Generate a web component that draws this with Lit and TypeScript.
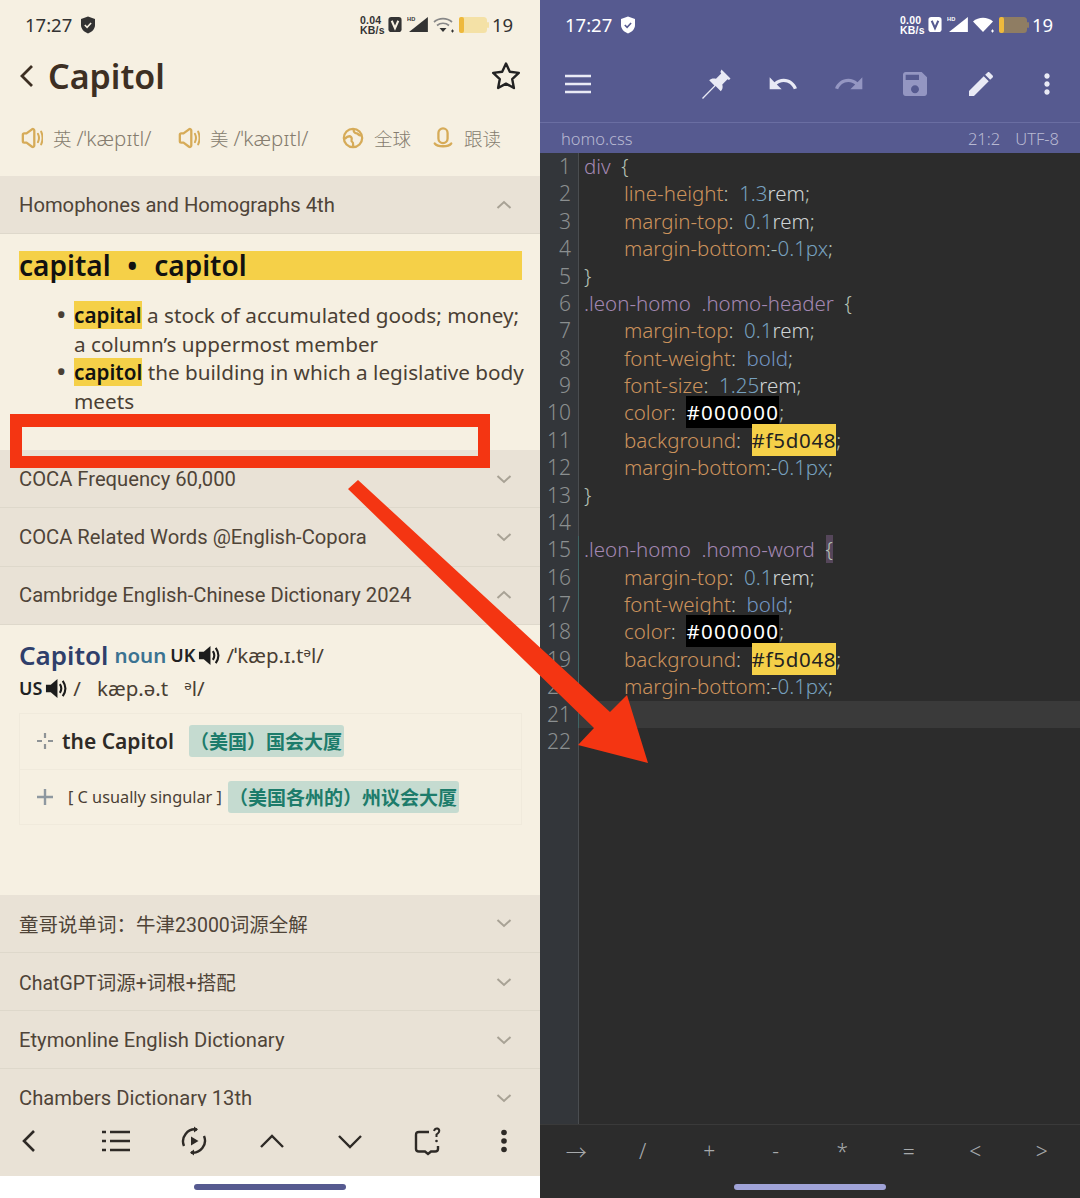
import { LitElement, html, css, svg } from "lit";
import { customElement } from "lit/decorators.js";

type Tok = [string, string];
const P = "p", N = "n", T = "t", U = "u", S = "s", B = "bv";
const prop = (name: string, ...rest: Tok[]): Tok[] => [["ind", ""], [P, name], ...rest];
const CODE: Tok[][] = [
  [[S, "div"], [U, "  {"]],
  prop("line-height", [U, ":  "], [N, "1.3"], [T, "rem"], [U, ";"]),
  prop("margin-top", [U, ":  "], [N, "0.1"], [T, "rem"], [U, ";"]),
  prop("margin-bottom", [U, ":-"], [N, "0.1px"], [U, ";"]),
  [[U, "}"]],
  [[S, ".leon-homo  .homo-header"], [U, "  {"]],
  prop("margin-top", [U, ":  "], [N, "0.1"], [T, "rem"], [U, ";"]),
  prop("font-weight", [U, ":  "], [B, "bold"], [U, ";"]),
  prop("font-size", [U, ":  "], [N, "1.25"], [T, "rem"], [U, ";"]),
  prop("color", [U, ":  "], ["blk", "#000000"], [U, ";"]),
  prop("background", [U, ":  "], ["yel", "#f5d048"], [U, ";"]),
  prop("margin-bottom", [U, ":-"], [N, "0.1px"], [U, ";"]),
  [[U, "}"]],
  [],
  [[S, ".leon-homo  .homo-word"], [U, "  "], ["brk", "{"]],
  prop("margin-top", [U, ":  "], [N, "0.1"], [T, "rem"], [U, ";"]),
  prop("font-weight", [U, ":  "], [B, "bold"], [U, ";"]),
  prop("color", [U, ":  "], ["blk", "#000000"], [U, ";"]),
  prop("background", [U, ":  "], ["yel", "#f5d048"], [U, ";"]),
  prop("margin-bottom", [U, ":-"], [N, "0.1px"], [U, ";"]),
  [],
  [],
];

const chevron = (up: boolean) => html`<svg class="chev" viewBox="0 0 16 10"><path d="${up ? "M1.5 8 8 2l6.5 6" : "M1.5 2 8 8l6.5-6"}" fill="none" stroke="currentColor" stroke-width="2"/></svg>`;
const mdi = (d: string, cls = "") => html`<svg class="mi ${cls}" viewBox="0 0 24 24"><path d="${d}" fill="currentColor"/></svg>`;
const speakerOutline = html`<svg class="ph" viewBox="0 0 24 24" fill="none" stroke="currentColor" stroke-width="2.500"><path d="M2 8.500Q2 7 3.500 7H6l6-4.500c1.200-.7 2.500 0 2.500 1.300v16.400c0 1.300-1.300 2-2.500 1.300L6 17H3.500Q2 17 2 15.500z" stroke-linejoin="round"/><path d="M18.500 7.500c1.500 3 1.500 6 0 9M22 5c2 4.500 2 9.500 0 14" stroke-linecap="round" stroke-width="2.200"/></svg>`;
const speakerSolid = html`<svg class="spk" viewBox="0 0 24 24"><path d="M1 8h5l7-6v20l-7-6H1z" fill="#1c1c1c"/><path d="M15.500 7.500c2 3 2 6 0 9M18.500 4c3.500 5 3.500 11 0 16" fill="none" stroke="#1c1c1c" stroke-width="2.200"/></svg>`;

function statusBar(speed: string, dark: boolean) {
  const fg = dark ? "#fff" : "#333";
  const batt = dark ? "#8f7d63" : "#f4e1a6";
  const bg = dark ? "#565a90" : "#f6f0e2";
  return html`<div class="status ${dark ? "sdark" : ""}">
    <span class="clock">17:27</span>
    <svg class="shield" viewBox="0 0 16 18"><path d="M8 .500 15 3v6c0 4-3 7-7 8.500C4 16 1 13 1 9V3z" fill="${fg}"/><path d="m4.800 9 2.300 2.300 4-4.300" fill="none" stroke="${bg}" stroke-width="1.600"/></svg>
    <span class="grow"></span>
    <span class="speed"><span>${speed}</span><span>KB/s</span></span>
    <svg class="vb" viewBox="0 0 14 16"><rect width="14" height="16" y="0" rx="3" fill="${fg}"/><path d="m3.500 4 3.500 8 3.500-8" fill="none" stroke="${bg}" stroke-width="2.200"/></svg>
    <svg class="sig" viewBox="0 0 22 18"><path d="M22 1v16H2z" fill="${fg}"/><rect x="0" y="0" width="10" height="6.500" fill="${bg}"/><text x="0" y="5.500" font-size="6" font-weight="700" font-family="Liberation Sans" fill="${fg}">HD</text></svg>
    <svg class="wifi" viewBox="0 0 22 18">
      ${dark
        ? svg`<path d="M0 5.500C5.500.500 14.500.500 20 5.500L10 16z" fill="${fg}"/>`
        : svg`<path d="M1 6c5-4.500 13-4.500 18 0M4 9.500c3.500-3 8.500-3 12 0" fill="none" stroke="#888" stroke-width="1.700"/><path d="M6.500 12h7L10 16z" fill="#333"/>`}
      <path d="M18 15h3M19.500 13.500v3" stroke="${fg}" stroke-width="1"/>
    </svg>
    <svg class="bat" viewBox="0 0 30 18"><rect x="0" y="1" width="28" height="16" rx="3.500" fill="${batt}"/><rect x="0" y="1" width="5" height="16" rx="2" fill="#eeb93c"/><rect x="28" y="6" width="2" height="6" rx="1" fill="${batt}"/></svg>
    <span class="level">19</span>
  </div>`;
}

const row = (label: string, up = false, cjk = false) => html`<div class="sec ${cjk ? "seccjk" : ""}"><span>${label}</span>${chevron(up)}</div>`;

@customElement("app-root")
export class AppRoot extends LitElement {
  static styles = css`
    :host { display: block; width: 1080px; height: 1198px; position: relative; overflow: hidden;
      font-family: "Noto Sans", "Noto Sans CJK SC", sans-serif; }
    .page { display: grid; grid-template-columns: 540px 540px; height: 1198px; }
    .left { display: flex; flex-direction: column; background: #f6f0e2; color: #4a3f34; height: 1198px; overflow: hidden; }
    .right { display: flex; flex-direction: column; background: #2c2c2c; height: 1198px; overflow: hidden; }

    .status { display: flex; align-items: center; height: 50px; box-sizing: border-box; padding: 0 28px 1px 25px; color: #333; flex: none; }
    .sdark { color: #fff; }
    .clock { font-size: 18.500px; width: 55px; }
    .shield { width: 16px; height: 18px; }
    .grow { flex: 1; }
    .speed { display: flex; flex-direction: column; font: 700 10.500px/10px "Liberation Sans", sans-serif; width: 28px; letter-spacing: .2px; }
    .vb { width: 14px; height: 15px; margin-right: 5px; }
    .sig { width: 21px; height: 17px; margin-right: 5px; }
    .wifi { width: 22px; height: 18px; margin-right: 4px; }
    .bat { width: 30px; height: 18px; margin-right: 3px; }
    .level { font-size: 18.500px; width: 20px; }

    .head { display: flex; align-items: center; height: 54px; box-sizing: border-box; padding: 0 19px 2px 19px; flex: none; }
    .back { width: 16px; height: 26px; margin-right: 13px; color: #3d2f23; }
    .title { font-size: 34px; font-weight: 600; color: #3d2f23; flex: 1; line-height: 52px; }
    .star { width: 30px; height: 30px; }

    .phon { display: grid; grid-template-columns: 157px 164px 90px auto; height: 68px; padding: 0 0 4px 21px; align-items: center; flex: none; }
    .phi { display: flex; align-items: center; gap: 10px; font-size: 18.500px; color: #857c6e; white-space: nowrap; }
    .ipa { font-size: 20.500px; font-weight: 300; margin-left: -5px; }
    .cjk { font-weight: 300; }
    .ph { width: 22px; height: 22px; color: #d6ab58; flex: none; }

    .scroll { flex: 1; min-height: 0; overflow: hidden; }
    .sec { display: flex; align-items: center; justify-content: space-between; height: 57.200px; background: #e9e2d6; border-bottom: 1px solid #ded8cb; padding: 0 28px 0 19px; font: 400 20.200px Roboto, "Noto Sans CJK SC", sans-serif; color: #4f4438; white-space: nowrap; }
    .seccjk { font-size: 19.500px; }
    .chev { width: 16px; height: 10px; color: #a8a295; }
    .homo { height: 216px; padding: 17px 18px 0 19px; box-sizing: border-box; }
    .bar { background: #f5d048; height: 29px; line-height: 29px; color: #111; font-weight: 600; font-size: 28px; white-space: pre; word-spacing: 1px; }
    .list { margin: 21px -4px 0 0; padding: 0 0 0 55px; font-size: 20.700px; line-height: 28.600px; color: #4a3f34; list-style: none; }
    .list li::before { content: "•"; display: inline-block; width: 18px; margin-left: -18px; font-size: 28px; line-height: 0; vertical-align: -2px; }
    .hl { background: #f5d048; color: #111; font-weight: 600; }
    .camb { height: 270px; padding: 14px 18px 0 19px; box-sizing: border-box; }
    .cline { display: flex; align-items: center; height: 33px; white-space: pre; color: #4a3f34; font-size: 20.500px; }
    .word { font-size: 26px; font-weight: 600; color: #2f3f6b; margin-right: 6px; }
    .pos { font-size: 20.500px; font-weight: 600; color: #3b7391; margin-right: 4px; }
    .reg { font-size: 18px; font-weight: 600; color: #222; margin-right: 3px; }
    .spk { width: 23px; height: 23px; margin-right: 5px; }
    .box { border: 1px solid #f0eadc; margin-top: 8px; height: 112px; box-sizing: border-box; }
    .brow { display: flex; align-items: center; height: 55px; padding-left: 16px; box-sizing: border-box; }
    .brow + .brow { border-top: 1px solid #f0eadc; height: 55px; }
    .plus { width: 18px; height: 18px; flex: none; }
    .hw { font-size: 21px; font-weight: 600; color: #2e2a26; margin: 0 15px 0 8px; }
    .gram { font-size: 16.300px; color: #4a3f34; margin: 0 6px 0 14px; white-space: pre; }
    .tag { background: #c5dbd0; color: #1d7c6b; font: 700 19px/32px "Noto Sans CJK SC", sans-serif; padding: 0 2px 0 1px; border-radius: 3px; white-space: nowrap; }

    .tools { display: flex; align-items: center; height: 70px; background: #e9e2d6; padding-left: 16px; gap: 50px; flex: none; color: #2e2a26; }
    .tools svg { width: 28px; height: 30px; flex: none; }
    .tools svg:first-child { margin-right: 8px; }
    .tools svg:last-child { margin-left: -2px; }
    .nav { height: 22px; background: #fff; display: flex; justify-content: center; padding-top: 8px; box-sizing: border-box; flex: none; }
    .nav i { width: 152px; height: 6px; border-radius: 3px; background: #565a90; }
    .ndark { background: #2c2c2c; }
    .ndark i { background: #a0a3d8; }

    .rhead { background: #565a90; flex: none; }
    .rbar { display: flex; align-items: center; height: 68px; padding: 0 17px 4px 24px; color: #e9eaf5; }
    .burger { width: 28px; height: 22px; flex: none; }
    .racts { display: flex; align-items: center; gap: 34px; margin-left: auto; }
    .mi { width: 32px; height: 32px; flex: none; }
    .off { color: #9496c2; }
    .pin { width: 32px; height: 32px; flex: none; }
    .file { display: flex; align-items: center; height: 30px; border-top: 1px solid #6a6ea2; padding: 0 21px; color: #b8b9d2; font-size: 16.500px; font-weight: 300; }
    .pos21 { margin-left: auto; margin-right: 15px; }

    .editor { display: flex; flex: 1; min-height: 0; border-bottom: 1px solid #3a3a3a; }
    .gutter { width: 38px; background: #33363a; border-right: 1px solid #4a4d50; flex: none; }
    .ln { height: 27.380px; line-height: 27.380px; text-align: right; padding-right: 7px; font-size: 21px; color: #8b8f90; font-weight: 300; }
    .mark { box-shadow: 1px 0 0 #3f6464; }
    .lines { flex: 1; }
    .cl { height: 27.380px; line-height: 27.380px; padding-left: 5px; font-size: 20.500px; white-space: pre; font-weight: 300; }
    .act { background: #3a3a3a; }
    .ind { display: inline-block; width: 40px; }
    .p { color: #cc935c; }
    .n { color: #76a0bf; }
    .t { color: #d0d4d5; }
    .u { color: #b6c3b6; }
    .s { color: #a387b2; }
    .bv { color: #7396c2; }
    .blk { background: #000; color: #fff; font-weight: 400; padding: 2px 0; letter-spacing: 1.300px; }
    .yel { background: #f5d048; color: #222; font-weight: 400; padding: 2px 0; letter-spacing: .7px; }
    .brk { background: #55465a; color: #b6c3b6; }

    .keys { display: grid; grid-template-columns: repeat(8, 66.500px); height: 51px; padding-left: 3px; align-items: center; justify-items: center; color: #a7aaac; font-size: 21px; font-weight: 300; flex: none; }
    .overlay { position: absolute; left: 0; top: 0; width: 1080px; height: 1198px; pointer-events: none; }
  `;

  render() {
    return html`<div class="page">
      <section class="left">
        ${statusBar("0.04", false)}
        <div class="head">
          <svg class="back" viewBox="0 0 16 26"><path d="M13 3 3 13l10 10" fill="none" stroke="currentColor" stroke-width="2.800"/></svg>
          <span class="title">Capitol</span>
          <svg class="star" viewBox="0 0 30 30"><path d="m15 2.500 3.800 8.300 9 1.100-6.600 6.200 1.700 8.900L15 22.600l-7.900 4.400 1.700-8.900-6.600-6.200 9-1.100z" fill="none" stroke="#222" stroke-width="2.400" stroke-linejoin="round"/></svg>
        </div>
        <div class="phon">
          <span class="phi">${speakerOutline}<span class="cjk">英</span><span class="ipa">/ˈkæpɪtl/</span></span>
          <span class="phi">${speakerOutline}<span class="cjk">美</span><span class="ipa">/ˈkæpɪtl/</span></span>
          <span class="phi"><svg class="ph" viewBox="0 0 24 24" fill="none" stroke="currentColor" stroke-width="2.500"><circle cx="12" cy="12" r="10"/><path d="M3 13c3-3 5-4 7-2s-1 4 1 5 1 3 1 6M13 2c-1 3 1 5 3 5s2 3 5 2"/></svg><span class="cjk">全球</span></span>
          <span class="phi"><svg class="ph" viewBox="0 0 24 24" fill="none" stroke="currentColor" stroke-width="2.500"><rect x="7" y="1.500" width="10" height="16" rx="5"/><path d="M3 18c3 4 15 4 18 0" stroke-linecap="round"/></svg><span class="cjk">跟读</span></span>
        </div>
        <div class="scroll">
          ${row("Homophones and Homographs 4th", true)}
          <div class="homo">
            <div class="bar">capital  •  capitol</div>
            <ul class="list">
              <li><span class="hl">capital</span> a stock of accumulated goods; money; a column’s uppermost member</li>
              <li><span class="hl">capitol</span> the building in which a legislative body meets</li>
            </ul>
          </div>
          ${row("COCA Frequency 60,000")}
          ${row("COCA Related Words @English-Copora")}
          ${row("Cambridge English-Chinese Dictionary 2024", true)}
          <div class="camb">
            <div class="cline"><span class="word">Capitol</span><span class="pos">noun</span><span class="reg">UK</span>${speakerSolid}<span>/ˈkæp.ɪ.tᵊl/</span></div>
            <div class="cline"><span class="reg">US</span>${speakerSolid}<span>/   kæp.ə.t   ᵊl/</span></div>
            <div class="box">
              <div class="brow">
                <svg class="plus" viewBox="0 0 18 18"><path d="M9 1v5M9 12v5M1 9h5M12 9h5" stroke="#8e9396" stroke-width="2.200"/></svg>
                <span class="hw">the Capitol</span><span class="tag">（美国）国会大厦</span>
              </div>
              <div class="brow">
                <svg class="plus" viewBox="0 0 18 18"><path d="M9 1v16M1 9h16" stroke="#8e98a0" stroke-width="2.400"/></svg>
                <span class="gram">[ C usually singular ]</span><span class="tag">（美国各州的）州议会大厦</span>
              </div>
            </div>
          </div>
          ${row("童哥说单词：牛津23000词源全解", false, true)}
          ${row("ChatGPT词源+词根+搭配", false, true)}
          ${row("Etymonline English Dictionary")}
          ${row("Chambers Dictionary 13th")}
        </div>
        <div class="tools">
          <svg viewBox="0 0 28 30"><path d="M18 5 8 15l10 10" fill="none" stroke="currentColor" stroke-width="2.600"/></svg>
          <svg viewBox="0 0 28 30"><path d="M0 6h4M8 6h20M0 15h4M8 15h20M0 24h4M8 24h20" stroke="currentColor" stroke-width="2.600"/></svg>
          <svg viewBox="0 0 28 30" fill="none" stroke="currentColor" stroke-width="2.400"><path d="M4 20A12 12 0 0 1 17 3.500M24 10a12 12 0 0 1-13 16.500"/><path d="m14 .500 4 3-4 3zM14 23.500l-4 3 4 3z" fill="currentColor" stroke="none"/><path d="M11 10.500v9l7.500-4.500z" fill="currentColor" stroke="none"/></svg>
          <svg viewBox="0 0 28 30"><path d="M3 21 14 10l11 11" fill="none" stroke="currentColor" stroke-width="2.400"/></svg>
          <svg viewBox="0 0 28 30"><path d="M3 10 14 21 25 10" fill="none" stroke="currentColor" stroke-width="2.400"/></svg>
          <svg viewBox="0 0 28 30" fill="none" stroke="currentColor" stroke-width="2.400"><path d="M15 6H5Q2 6 2 9v14q0 2.500 3 2.500h6l3 2.500 3-2.500h4q3 0 3-2.500v-3"/><path d="M20 5q1-3 3.500-2.500 2.500 1 1.500 3.500-1 1.500-2.500 2.500v2.500" stroke-width="2"/><circle cx="22.500" cy="15" r="1.300" fill="currentColor" stroke="none"/></svg>
          <svg viewBox="0 0 28 30"><circle cx="14" cy="6.500" r="2.800" fill="currentColor"/><circle cx="14" cy="15" r="2.800" fill="currentColor"/><circle cx="14" cy="23.500" r="2.800" fill="currentColor"/></svg>
        </div>
        <div class="nav"><i></i></div>
      </section>

      <section class="right">
        <div class="rhead">
          ${statusBar("0.00", true)}
          <div class="rbar">
            <svg class="burger" viewBox="0 0 28 22"><path d="M1 3h26M1 11h26M1 19h26" stroke="currentColor" stroke-width="2.600"/></svg>
            <div class="racts">
              <svg class="pin" viewBox="0 0 32 32"><path d="M20.500 1.500 29.500 10.500 28 12l-1.500-.8-5.200 5.200c.8 2.600.3 5-1.500 6.800l-5.200-5.200L2 31 1 30l12.400-12.500-5.200-5.200c1.800-1.800 4.200-2.300 6.800-1.500l5.200-5.200-.8-1.500z" fill="currentColor"/></svg>
              ${mdi("M12.500 8c-2.650 0-5.050.99-6.900 2.600L2 7v9h9l-3.620-3.620c1.390-1.160 3.160-1.880 5.120-1.880 3.540 0 6.550 2.310 7.600 5.500l2.370-.78C21.080 11.030 17.150 8 12.500 8z")}
              ${mdi("M18.400 10.600C16.550 8.990 14.150 8 11.500 8c-4.650 0-8.580 3.030-9.970 7.220l2.370.78c1.050-3.190 4.050-5.500 7.600-5.500 1.950 0 3.730.72 5.120 1.880L13 16h9V7l-3.600 3.600z", "off")}
              ${mdi("M17 3H5c-1.110 0-2 .9-2 2v14c0 1.100.89 2 2 2h14c1.100 0 2-.9 2-2V7l-4-4zm-5 16c-1.660 0-3-1.340-3-3s1.340-3 3-3 3 1.340 3 3-1.340 3-3 3zm3-10H5V5h10v4z", "off")}
              ${mdi("M3 17.250V21h3.750L17.810 9.940l-3.750-3.750L3 17.250zM20.710 7.040c.39-.39.39-1.020 0-1.410l-2.340-2.340c-.39-.39-1.020-.39-1.410 0l-1.830 1.830 3.750 3.750 1.830-1.830z")}
              ${mdi("M12 8c1.100 0 2-.9 2-2s-.9-2-2-2-2 .9-2 2 .9 2 2 2zm0 2c-1.100 0-2 .9-2 2s.9 2 2 2 2-.9 2-2-.9-2-2-2zm0 6c-1.100 0-2 .9-2 2s.9 2 2 2 2-.9 2-2-.9-2-2-2z")}
            </div>
          </div>
          <div class="file"><span>homo.css</span><span class="pos21">21:2</span><span>UTF-8</span></div>
        </div>
        <div class="editor">
          <div class="gutter">
            ${CODE.map((_, i) => html`<div class="ln ${i >= 14 && i <= 20 ? "mark" : ""}">${i + 1}</div>`)}
          </div>
          <div class="lines">
            ${CODE.map((l, i) => html`<div class="cl ${i === 20 ? "act" : ""}">${l.map(([c, t]) => html`<span class="${c}">${t}</span>`)}</div>`)}
          </div>
        </div>
        <div class="keys">${["→", "/", "+", "-", "*", "=", "<", ">"].map((k) => html`<span>${k}</span>`)}</div>
        <div class="nav ndark"><i></i></div>
      </section>
    </div>
    <svg class="overlay" viewBox="0 0 1080 1198">
      <path fill-rule="evenodd" fill="#f43512" d="M10 414H490V468H10zM22 427V456H478V427z"/>
      <path fill="#f43512" d="M348 489 358 480 610 712 627 695 648 763 578 745 594 728z"/>
    </svg>`;
  }
}
